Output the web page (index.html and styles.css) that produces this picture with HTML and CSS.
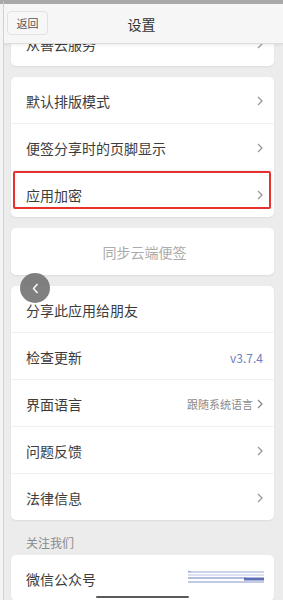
FILE: index.html
```html
<!DOCTYPE html>
<html lang="zh">
<head>
<meta charset="utf-8">
<link rel="stylesheet" href="styles.css">
</head>
<body>
<div class="frame">
  <div class="left-strip"></div>
  <div class="screen">
    <div class="topbar"></div>
    <header class="header">
      <div class="back">返回</div>
      <div class="title">设置</div>
    </header>

    <div class="list">
      <div class="card">
        <div class="row"><span class="label">从善云服务</span><span class="chev"><svg width="6" height="10" viewBox="0 0 6 10"><path d="M1 1l4 4-4 4" fill="none" stroke="#9a9a9a" stroke-width="1.3"/></svg></span></div>
      </div>

      <div class="card">
        <div class="row"><span class="label">默认排版模式</span><span class="chev"><svg width="6" height="10" viewBox="0 0 6 10"><path d="M1 1l4 4-4 4" fill="none" stroke="#9a9a9a" stroke-width="1.3"/></svg></span></div>
        <div class="row"><span class="label">便签分享时的页脚显示</span><span class="chev"><svg width="6" height="10" viewBox="0 0 6 10"><path d="M1 1l4 4-4 4" fill="none" stroke="#9a9a9a" stroke-width="1.3"/></svg></span></div>
        <div class="row marked"><span class="label">应用加密</span><span class="chev"><svg width="6" height="10" viewBox="0 0 6 10"><path d="M1 1l4 4-4 4" fill="none" stroke="#9a9a9a" stroke-width="1.3"/></svg></span><div class="redbox"></div></div>
      </div>

      <div class="card">
        <div class="row sync">同步云端便签</div>
      </div>

      <div class="card">
        <div class="row"><span class="label">分享此应用给朋友</span></div>
        <div class="row"><span class="label">检查更新</span><span class="version">v3.7.4</span></div>
        <div class="row"><span class="label">界面语言</span><span class="value">跟随系统语言<svg width="6" height="10" viewBox="0 0 6 10"><path d="M1 1l4 4-4 4" fill="none" stroke="#8a8a8a" stroke-width="1.3"/></svg></span></div>
        <div class="row"><span class="label">问题反馈</span><span class="chev"><svg width="6" height="10" viewBox="0 0 6 10"><path d="M1 1l4 4-4 4" fill="none" stroke="#9a9a9a" stroke-width="1.3"/></svg></span></div>
        <div class="row"><span class="label">法律信息</span><span class="chev"><svg width="6" height="10" viewBox="0 0 6 10"><path d="M1 1l4 4-4 4" fill="none" stroke="#9a9a9a" stroke-width="1.3"/></svg></span></div>
      </div>

      <div class="section">关注我们</div>

      <div class="card">
        <div class="row"><span class="label">微信公众号</span>
          <svg class="lines" width="80" height="18" viewBox="0 0 80 18">
            <path d="M2 2h76" stroke="#9aa6d6" stroke-width="1"/>
            <path d="M2 1l3 1" stroke="#9aa6d6" stroke-width="1"/>
            <path d="M2 5h76" stroke="#b8c0e2" stroke-width="1"/>
            <path d="M2 8h58" stroke="#6a7cbf" stroke-width="1.2"/>
            <path d="M58 9h20" stroke="#5c6fb4" stroke-width="3"/>
            <path d="M2 12h76" stroke="#8896cf" stroke-width="1"/>
          </svg>
        </div>
      </div>
    </div>

    <div class="float-back"><svg width="7" height="11" viewBox="0 0 7 11"><path d="M5.5 1L1.5 5.5l4 4.5" fill="none" stroke="#fff" stroke-width="1.4"/></svg></div>
    <div class="home"></div>
  </div>
</div>
</body>
</html>
```

FILE: styles.css
```css
html, body {
  margin: 0;
  padding: 0;
}
body {
  width: 283px;
  height: 600px;
  overflow: hidden;
  background: #ececec;
  font-family: "Noto Sans CJK SC", "Noto Sans", sans-serif;
  color: #3a3a3a;
}
.frame {
  display: flex;
  height: 600px;
}
.left-strip {
  width: 3px;
  background: #f4f4f6;
  border-top: 4px solid #a9a9a9;
  border-right: 1px solid #d2d2d2;
  flex: none;
}
.screen {
  position: relative;
  flex: 1;
  background: #ececec;
  overflow: hidden;
}
.topbar {
  position: absolute;
  top: 0;
  left: 0;
  right: 0;
  height: 4px;
  background: #a9a9a9;
  z-index: 3;
}
.header {
  position: absolute;
  top: 4px;
  left: 0;
  right: 0;
  height: 39px;
  background: #f6f6f6;
  border-bottom: 1px solid #dcdcdc;
  box-shadow: 0 1px 3px rgba(0,0,0,0.08);
  display: flex;
  align-items: center;
  justify-content: center;
  z-index: 2;
}
.back {
  position: absolute;
  left: 3px;
  top: 7px;
  width: 41px;
  height: 24px;
  box-sizing: border-box;
  border: 1px solid #e2e2e2;
  border-radius: 4px;
  background: #f7f7f7;
  font-size: 11px;
  color: #555;
  display: flex;
  align-items: center;
  justify-content: center;
}
.title {
  font-size: 14px;
  color: #333;
  margin-left: -4px;
}
.list {
  padding: 20px 5px 0 7px;
  display: flex;
  flex-direction: column;
  gap: 11px;
}
.card {
  background: #fff;
  border-radius: 5px;
  box-shadow: 0 1px 2px rgba(0,0,0,0.07);
  margin-right: 4px;
}
.row {
  position: relative;
  padding: 2px 11px 0 15px;
  box-sizing: border-box;
  height: 46px;
  display: flex;
  align-items: center;
  justify-content: space-between;
  font-size: 14px;
  color: #3c3c3c;
}
.row + .row {
  border-top: 1px solid #f1f1f1;
  height: 47px;
}
.chev {
  display: flex;
  align-items: center;
}
.sync {
  justify-content: center;
  color: #ababab;
  height: 47px;
  padding-top: 0;
}
.version {
  font-size: 12px;
  color: #6d80c2;
}
.value {
  font-size: 11px;
  color: #8a8a8a;
  display: flex;
  align-items: center;
  gap: 4px;
}
.redbox {
  position: absolute;
  left: 2px;
  right: 3px;
  top: 0;
  height: 38px;
  border: 2px solid #e8312c;
  border-radius: 2px;
  box-sizing: border-box;
}
.section {
  font-size: 12px;
  line-height: 16px;
  color: #8a8a8a;
  padding: 4px 0 0 15px;
  margin-bottom: -7px;
}
.lines {
  margin-right: -3px;
}
.float-back {
  position: absolute;
  left: 16px;
  top: 273px;
  width: 30px;
  height: 30px;
  border-radius: 50%;
  background: rgba(110,110,110,0.88);
  display: flex;
  align-items: center;
  justify-content: center;
}
.home {
  position: absolute;
  left: 92px;
  bottom: 2px;
  width: 93px;
  height: 2px;
  border-radius: 1px;
  background: #5a5a5a;
}
```
